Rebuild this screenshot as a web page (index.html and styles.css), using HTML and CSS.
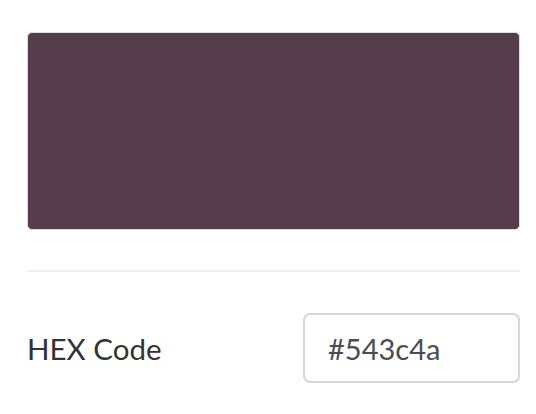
FILE: index.html
```html
<!DOCTYPE html>
<html>
<head>
<meta charset="utf-8">
<link rel="stylesheet" href="styles.css">
</head>
<body>
<div class="panel">
  <div class="swatch"></div>
  <hr class="divider">
  <div class="row">
    <label class="label" for="hex">HEX Code</label>
    <input id="hex" class="hex-input" type="text" value="#543c4a">
  </div>
</div>
</body>
</html>
```

FILE: styles.css
```css
html, body {
  margin: 0;
  padding: 0;
  background: #ffffff;
}
body {
  font-family: "Lato", "Liberation Sans", sans-serif;
}
.panel {
  width: 493px;
  padding: 32px 16px 0 27px;
  display: flex;
  flex-direction: column;
}
.swatch {
  height: 196px;
  background: #543c4a;
  border: 1px solid #d9dce1;
  border-radius: 5px;
}
.divider {
  margin: 40px 0 0 0;
  border: 0;
  height: 2px;
  background: #eeeeee;
}
.row {
  margin-top: 41px;
  display: flex;
  align-items: center;
  justify-content: space-between;
}
.label {
  font-size: 29.5px;
  color: #333333;
}
.hex-input {
  box-sizing: border-box;
  width: 217px;
  height: 70px;
  border: 2px solid #d3d7dc;
  border-radius: 7px;
  padding: 0 0 0 23px;
  font-family: "Lato", "Liberation Sans", sans-serif;
  font-size: 29px;
  color: #474c55;
  background: #ffffff;
  outline: none;
}
```
